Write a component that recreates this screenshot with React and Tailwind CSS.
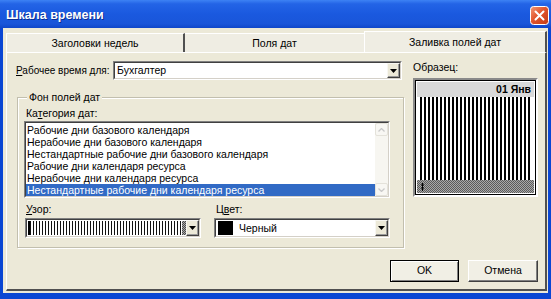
import React from 'react';

const categories = [
  'Рабочие дни базового календаря',
  'Нерабочие дни базового календаря',
  'Нестандартные рабочие дни базового календаря',
  'Рабочие дни календаря ресурса',
  'Нерабочие дни календаря ресурса',
  'Нестандартные рабочие дни календаря ресурса',
];

const DropButton = () => (
  <div className="w-[13px] shrink-0 flex items-center justify-center bg-[#ece9d8] border border-t-[#f8f7f2] border-l-[#f8f7f2] border-r-[#404040] border-b-[#404040] shadow-[inset_-1px_-1px_0_#9a9a9a]">
    <svg width="7" height="4" viewBox="0 0 7 4">
      <path d="M0 0h7L3.5 4z" fill="#000" />
    </svg>
  </div>
);

// sunken white box, classic 2px border
const Field = ({ className = '', children }) => (
  <div className={`border border-t-[#808080] border-l-[#808080] border-r-white border-b-white ${className}`}>
    <div className="h-full flex border border-t-[#404040] border-l-[#404040] border-r-[#d4d0c8] border-b-[#d4d0c8] bg-white">
      {children}
    </div>
  </div>
);

const ScrollBox = ({ up }) => (
  <div className="h-[13px] flex items-center justify-center border border-[#e4e2da] bg-[#f8f7f3] rounded-[2px]">
    <svg width="7" height="4" viewBox="0 0 7 4">
      <path d={up ? 'M0.5 3.5L3.5 0.5L6.5 3.5' : 'M0.5 0.5L3.5 3.5L6.5 0.5'} fill="none" stroke="#c9c9c9" strokeWidth="1.3" />
    </svg>
  </div>
);

const CloseIcon = () => (
  <svg width="19" height="19" viewBox="0 0 19 19">
    <defs>
      <linearGradient id="cls" x1="0" y1="0" x2="1" y2="1">
        <stop offset="0" stopColor="#f39a78" />
        <stop offset="0.45" stopColor="#e2552c" />
        <stop offset="1" stopColor="#c23a15" />
      </linearGradient>
    </defs>
    <rect x="0.5" y="0.5" width="18" height="18" rx="3" fill="url(#cls)" stroke="#ffffff" />
    <path d="M5.5 5.5l8 8M13.5 5.5l-8 8" stroke="#fff" strokeWidth="2" strokeLinecap="round" />
  </svg>
);

export default function App() {
  return (
    <div className="w-[551px] h-[299px] overflow-hidden bg-[#0a46d3] flex flex-col font-['Liberation_Sans',Arial,sans-serif] text-[10.5px] text-black">
      {/* title bar */}
      <div className="h-[28px] shrink-0 flex items-start justify-between pl-[6px] pr-[2px] bg-[image:linear-gradient(180deg,#3d82f4_0%,#2364e6_14%,#1a59df_50%,#1955d9_85%,#0f46c9_100%)]">
        <span className="mt-[8px] text-white font-bold text-[12.5px] leading-[15px] [text-shadow:1px_1px_0_#0b2f93]">
          Шкала времени
        </span>
        <div className="mt-[6px]">
          <CloseIcon />
        </div>
      </div>

      {/* dialog body */}
      <div className="h-[265px] shrink-0 mx-[3px] bg-[#ece9d8] flex flex-col pl-[3px] pr-[1px] pb-[2px]">
        {/* tabs */}
        <div className="h-[24px] shrink-0 flex items-end">
          <div className="w-[179px] h-[19px] pt-[2px] flex items-center justify-center bg-[#efede3] border-t border-l border-t-white border-l-white border-r-2 border-r-[#505050]">
            Заголовки недель
          </div>
          <div className="w-[179px] h-[19px] pt-[2px] flex items-center justify-center bg-[#efede3] border-t border-t-white">
            Поля дат
          </div>
          <div className="flex-1 h-[21px] pt-[1px] flex items-center justify-center bg-[#efede3] border-t border-l border-t-white border-l-white border-r-2 border-r-[#505050]">
            Заливка полей дат
          </div>
        </div>

        {/* tab panel */}
        <div className="flex-1 flex flex-col border-l border-t border-l-white border-t-white border-r-2 border-b-2 border-r-[#505050] border-b-[#505050] pt-[8px] pl-[9px] pr-[7px] pb-[7px]">
          <div className="flex gap-[9px]">
            {/* left column */}
            <div className="w-[388px] flex flex-col">
              <div className="flex items-center h-[19px]">
                <span className="w-[97px] text-[10px] leading-[13px] whitespace-nowrap">
                  <u>Р</u>абочее время для:
                </span>
                <Field className="w-[289px] h-[19px]">
                  <span className="flex-1 pl-[2px] leading-[15px]">Бухгалтер</span>
                  <DropButton />
                </Field>
              </div>

              <fieldset className="ml-[1px] w-[387px] mt-[11px] border border-[#c2bfae] shadow-[1px_1px_0_#fff,inset_1px_1px_0_#fff] pl-[6px] pr-[13px] pb-[9px]">
                <legend className="ml-[3px] px-[2px] leading-[13px] bg-[#ece9d8]">Фон полей дат</legend>
                <div className="mt-[3px] ml-[2px] leading-[13px]">
                  Ка<u>т</u>егория дат:
                </div>
                <Field className="mt-[1px] h-[77px]">
                  <div className="flex-1 pt-[1px]">
                    {categories.map((c, i) => (
                      <div
                        key={c}
                        className={`h-[12px] leading-[12px] pl-[1px] whitespace-nowrap ${i === 5 ? 'bg-[#316ac5] text-white' : ''}`}
                      >
                        {c}
                      </div>
                    ))}
                  </div>
                  <div className="w-[13px] flex flex-col bg-[#f7f6f1]">
                    <ScrollBox up />
                    <div className="flex-1" />
                    <ScrollBox />
                  </div>
                </Field>

                <div className="mt-[5px] flex leading-[13px]">
                  <span className="w-[192px] pl-[2px]">
                    <u>У</u>зор:
                  </span>
                  <span>
                    Ц<u>в</u>ет:
                  </span>
                </div>
                <div className="mt-[2px] flex gap-[13px]">
                  <Field className="ml-[1px] w-[176px] h-[20px]">
                    <div className="flex-1 my-[1px] ml-[1px] border-l-2 border-black bg-[image:repeating-linear-gradient(90deg,#111_0_1.5px,#fff_1.5px_3px)]" />
                    <div className="w-[4px] my-[1px] bg-[image:repeating-conic-gradient(#4a4a4a_0_25%,#a8a8a8_0_50%)] bg-[length:2px_2px]" />
                    <DropButton />
                  </Field>
                  <Field className="w-[176px] h-[20px]">
                    <div className="flex-1 flex items-center pl-[2px]">
                      <div className="w-[15px] h-[14px] bg-black" />
                      <span className="ml-[6px] leading-[14px]">Черный</span>
                    </div>
                    <DropButton />
                  </Field>
                </div>
              </fieldset>
            </div>

            {/* sample */}
            <div className="w-[125px] flex flex-col">
              <div className="leading-[13px]">Образец:</div>
              <div className="mt-[4px] h-[119px] border-2 border-t-[#8a8a8a] border-l-[#8a8a8a] border-r-white border-b-white">
                <div className="h-full border border-black bg-white p-[1px] flex flex-col">
                  <div className="h-[15px] bg-[#d9d9d9] text-right pr-[3px] font-bold leading-[15px]">01 Янв</div>
                  <div className="flex-1 mx-[3px] bg-[image:repeating-linear-gradient(90deg,#000_0_2px,#fff_2px_4px)]" />
                  <div className="h-[13px] flex items-center pl-[4px] bg-[image:repeating-conic-gradient(#5c5c5c_0_25%,#a9a9a9_0_50%)] bg-[length:2px_2px]">
                    <svg width="3" height="8" viewBox="0 0 3 8">
                      <path d="M1.5 0v8M0 2h3M0 5h3" stroke="#000" strokeWidth="1" />
                    </svg>
                  </div>
                </div>
              </div>
            </div>
          </div>

          {/* buttons */}
          <div className="mt-auto flex justify-end gap-[9px]">
            <button className="w-[69px] h-[22px] bg-[#f1efe5] border border-black shadow-[inset_1px_1px_0_#fff,inset_-1px_-1px_0_#808080]">
              OK
            </button>
            <button className="w-[70px] h-[22px] bg-[#f1efe5] border border-t-white border-l-white border-r-[#404040] border-b-[#404040] shadow-[inset_-1px_-1px_0_#808080]">
              Отмена
            </button>
          </div>
        </div>
      </div>
    </div>
  );
}
